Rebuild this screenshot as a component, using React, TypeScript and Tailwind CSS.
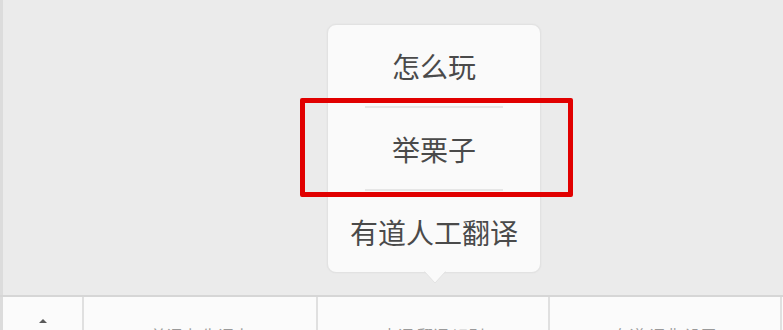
import React from "react";

const items = ["怎么玩", "举栗子", "有道人工翻译"];
const tabs = [
  { label: "单词本 生词本", w: "w-[234px]" },
  { label: "查词 翻译 识别", w: "w-[232px]" },
  { label: "有道 词典 设置", w: "w-[232px]" },
];

export default function App() {
  return (
    <div
      className="flex h-[330px] w-[783px] flex-col overflow-hidden bg-[#ebebeb]"
      style={{ fontFamily: '"Noto Sans CJK SC", "Noto Sans", sans-serif' }}
    >
      {/* Page area behind the popup */}
      <div className="relative flex-1 border-l-[3px] border-l-[#dcdcdc]">
        {/* Popup menu */}
        <div className="absolute left-[324px] top-[24px] w-[214px] rounded-[9px] border border-[#e2e2e2] bg-[#fafafa] shadow-[0_0_2px_rgba(0,0,0,0.06)]">
          {items.map((t, i) => (
            <div key={t} className="flex flex-col items-center">
              {i > 0 && <div className="h-[2px] w-[138px] bg-[#e6e6e6]" />}
              <div className="flex h-[81px] items-center justify-center text-[28px] leading-none text-[#4a4a4a]">
                {t}
              </div>
            </div>
          ))}
          {/* Arrow */}
          <svg
            className="absolute left-[96px] top-full -mt-[1px]"
            width="22"
            height="13"
            viewBox="0 0 22 13"
          >
            <path d="M0 0 L11 12 L22 0" fill="#fafafa" stroke="#e2e2e2" strokeWidth="1" />
            <rect x="0" y="-1" width="22" height="1.5" fill="#fafafa" />
          </svg>
        </div>

        {/* Red highlight frame */}
        <div className="absolute left-[297px] top-[98px] h-[99px] w-[273px] rounded-[2px] border-[5px] border-[#e10000]" />
      </div>

      {/* Bottom tab bar */}
      <div className="flex h-[35px] border-t-2 border-[#d6d6d6] bg-[#fbfbfb]">
        <div className="flex w-[84px] justify-center border-l-[3px] border-r-2 border-l-[#dcdcdc] border-r-[#e0e0e0] pt-[21px]">
          <svg width="10" height="6" viewBox="0 0 10 6">
            <path d="M1 5 L5 1 L9 5 Z" fill="#5a5a5a" />
          </svg>
        </div>
        {tabs.map((t) => (
          <div
            key={t.label}
            className={`flex ${t.w} justify-center border-r-2 border-[#e0e0e0] pt-[30px] text-[16px] leading-none text-[#9a9a9a]`}
          >
            {t.label}
          </div>
        ))}
      </div>
    </div>
  );
}
